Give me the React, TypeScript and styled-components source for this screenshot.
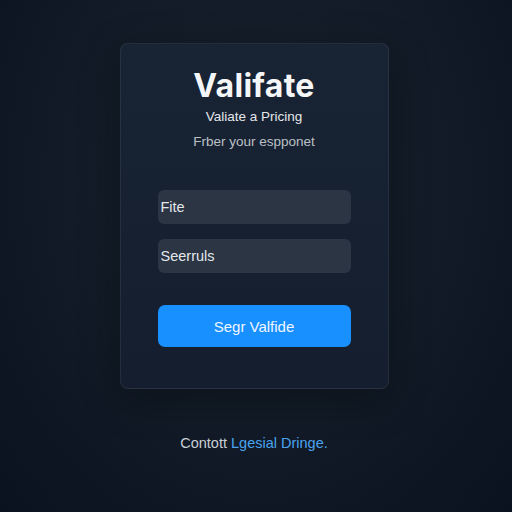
import styled, { createGlobalStyle } from 'styled-components';

const GlobalStyle = createGlobalStyle`
  html, body {
    margin: 0;
    padding: 0;
    height: 100%;
  }
  body {
    background: radial-gradient(ellipse at 50% 35%, #18212d 0%, #111a26 55%, #0a121f 100%);
    font-family: 'Liberation Sans', Arial, sans-serif;
  }
  #root {
    min-height: 100vh;
  }
`;

const Page = styled.main`
  width: 512px;
  height: 512px;
  display: flex;
  flex-direction: column;
  align-items: center;
  padding: 43px 4px 0 0;
  box-sizing: border-box;
`;

const Card = styled.section`
  width: 269px;
  height: 346px;
  box-sizing: border-box;
  padding: 23px 37px 0;
  display: flex;
  flex-direction: column;
  align-items: stretch;
  background: linear-gradient(180deg, #182334 0%, #141e2e 100%);
  border: 1px solid rgba(255, 255, 255, 0.07);
  border-radius: 8px;
  box-shadow: 0 10px 40px rgba(0, 0, 0, 0.3);
`;

const Title = styled.h1`
  margin: 0;
  text-align: center;
  color: #f4f6f8;
  font-family: Inter, 'Liberation Sans', sans-serif;
  font-weight: 700;
  font-size: 32px;
  line-height: 37px;
  letter-spacing: 0.3px;
`;

const Subtitle = styled.p<{ $muted?: boolean }>`
  margin: ${(p) => (p.$muted ? '9px 0 0' : '5px 0 0')};
  text-align: center;
  color: ${(p) => (p.$muted ? '#bcc0c6' : '#e4e7ea')};
  font-size: 13.5px;
  line-height: 16px;
`;

const Form = styled.form`
  margin-top: 40px;
  display: flex;
  flex-direction: column;
  gap: 15px;
`;

const Field = styled.div`
  height: 34px;
  display: flex;
  align-items: center;
  padding: 0 3px;
  background: #2b3544;
  border-radius: 6px;
  color: #e3e7ec;
  font-size: 14.5px;
`;

const Button = styled.button`
  margin-top: 17px;
  height: 42px;
  border: none;
  border-radius: 7px;
  background: #1890ff;
  color: #eef6ff;
  font-family: 'Liberation Sans', Arial, sans-serif;
  font-size: 15px;
  cursor: pointer;
`;

const Footer = styled.p`
  margin: 46px 0 0;
  color: #c9cfd6;
  font-size: 14.5px;
  line-height: 16px;
`;

const FooterLink = styled.a`
  color: #4aa3f0;
  text-decoration: none;
`;

export default function App() {
  return (
    <>
      <GlobalStyle />
      <Page>
        <Card>
          <Title>Valifate</Title>
          <Subtitle>Valiate a Pricing</Subtitle>
          <Subtitle $muted>Frber your espponet</Subtitle>
          <Form onSubmit={(e) => e.preventDefault()}>
            <Field>Fite</Field>
            <Field>Seerruls</Field>
            <Button type="submit">Segr Valfide</Button>
          </Form>
        </Card>
        <Footer>
          Contott <FooterLink href="#">Lgesial Dringe.</FooterLink>
        </Footer>
      </Page>
    </>
  );
}
